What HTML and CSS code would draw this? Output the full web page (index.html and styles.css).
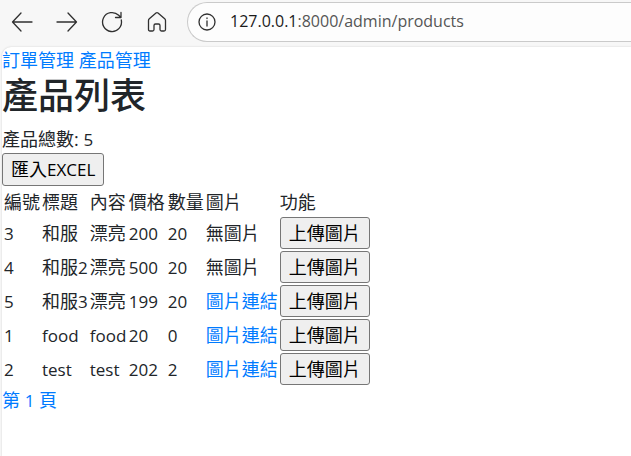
FILE: index.html
```html
<!DOCTYPE html>
<html lang="zh-Hant">
<head>
<meta charset="utf-8">
<title>產品列表</title>
<link rel="stylesheet" href="styles.css">
</head>
<body>
<header class="toolbar">
  <button class="tool" aria-label="上一頁"><svg viewBox="0 0 24 24"><path d="M22 12H2.5M11 3L2.5 12L11 21"/></svg></button>
  <button class="tool" aria-label="下一頁"><svg viewBox="0 0 24 24"><path d="M2 12H21.500M13 3L21.500 12L13 21"/></svg></button>
  <button class="tool" aria-label="重新整理"><svg viewBox="0 0 24 24"><path d="M21.300 10A9.500 9.500 0 1 1 18.700 5.300L21 7.500M21 2.500V7.500H15.500"/></svg></button>
  <button class="tool" aria-label="首頁"><svg viewBox="0 0 24 24"><path d="M3.500 10.500Q3.500 9.500 4.300 8.800L11 3Q12 2.200 13 3L19.700 8.800Q20.500 9.500 20.500 10.500V19.500Q20.500 21 19 21H16.500Q15 21 15 19.500V15.500Q15 14 13.500 14H10.500Q9 14 9 15.500V19.500Q9 21 7.500 21H5Q3.500 21 3.500 19.500Z"/></svg></button>
  <div class="address">
    <svg class="info" viewBox="0 0 18 18"><circle cx="9" cy="9" r="8"/><path d="M9 8V13M9 5V5.500"/></svg>
    <span class="url"><span class="host">127.0.0.1</span>:8000/admin/products</span>
  </div>
</header>
<main class="page">
  <nav><a href="#orders">訂單管理</a> <a href="#products">產品管理</a></nav>
  <h1>產品列表</h1>
  <div>產品總數: <span class="latin">5</span></div>
  <button class="btn import">匯入<span class="latin">EXCEL</span></button>
  <table>
    <colgroup><col><col><col class="medium"><col class="medium"><col><col><col></colgroup>
    <thead>
      <tr><th>編號</th><th>標題</th><th>內容</th><th>價格</th><th>數量</th><th>圖片</th><th>功能</th></tr>
    </thead>
    <tbody>
      <tr><td class="latin">3</td><td>和服</td><td>漂亮</td><td class="latin">200</td><td class="latin">20</td><td>無圖片</td><td><button class="btn">上傳圖片</button></td></tr>
      <tr><td class="latin">4</td><td>和服<span class="latin">2</span></td><td>漂亮</td><td class="latin">500</td><td class="latin">20</td><td>無圖片</td><td><button class="btn">上傳圖片</button></td></tr>
      <tr><td class="latin">5</td><td>和服<span class="latin">3</span></td><td>漂亮</td><td class="latin">199</td><td class="latin">20</td><td><a href="#image-5">圖片連結</a></td><td><button class="btn">上傳圖片</button></td></tr>
      <tr><td class="latin">1</td><td class="latin">food</td><td class="latin">food</td><td class="latin">20</td><td class="latin">0</td><td><a href="#image-1">圖片連結</a></td><td><button class="btn">上傳圖片</button></td></tr>
      <tr><td class="latin">2</td><td class="latin">test</td><td class="latin">test</td><td class="latin">202</td><td class="latin">2</td><td><a href="#image-2">圖片連結</a></td><td><button class="btn">上傳圖片</button></td></tr>
    </tbody>
  </table>
  <a href="#page-1">第 <span class="latin">1</span> 頁</a>
</main>
</body>
</html>
```
FILE: styles.css
```css
* { box-sizing: border-box; }

body {
  margin: 0;
  background: #f7f7f7;
  color: #212529;
  font: 18px/27px "Open Sans", "Noto Sans CJK TC", sans-serif;
  min-height: 100vh;
  display: flex;
  flex-direction: column;
}

a { color: #007bff; text-decoration: none; }

.latin { font-size: 17px; }

/* Browser bar */
.toolbar {
  display: flex;
  align-items: center;
  height: 47px;
  padding: 0 0 3px 10px;
  overflow: hidden;
}

.tool {
  flex: none;
  width: 45px;
  height: 24px;
  padding: 0;
  border: 0;
  background: none;
  text-align: left;
}

.tool svg {
  display: block;
  width: 24px;
  height: 24px;
}

svg {
  fill: none;
  stroke: #303030;
  stroke-width: 1.3;
  stroke-linecap: round;
  stroke-linejoin: round;
}

.address {
  flex: 1;
  display: flex;
  align-items: center;
  gap: 14px;
  height: 40px;
  margin-left: -3px;
  padding-left: 10px;
  border: 1px solid #cacaca;
  border-right: 0;
  border-radius: 20px 0 0 20px;
  background: #fdfdfd;
}

.info { width: 18px; height: 18px; }

.url { padding-bottom: 2px; font-size: 16px; color: #555; }
.host { color: #1b1b1b; }

/* Page content */
.page {
  flex: 1;
  margin-left: 2px;
  border-top-left-radius: 9px;
  background: #fff;
  box-shadow: 0 0 2px #ccc;
}

h1 {
  margin: 0 0 8px;
  font-size: 36px;
  line-height: 44px;
  font-weight: 500;
}

.btn {
  display: block;
  height: 32px;
  padding: 0 8px;
  border: 1px solid #767676;
  border-radius: 3px;
  background: #efefef;
  color: #000;
  font: inherit;
}

.import { height: 33px; }

table { border-collapse: collapse; margin: 1px; }

th, td { padding: 1px; text-align: left; font-weight: 400; }

th { padding: 2px 1px 0; }

.medium { width: 39px; }
```
